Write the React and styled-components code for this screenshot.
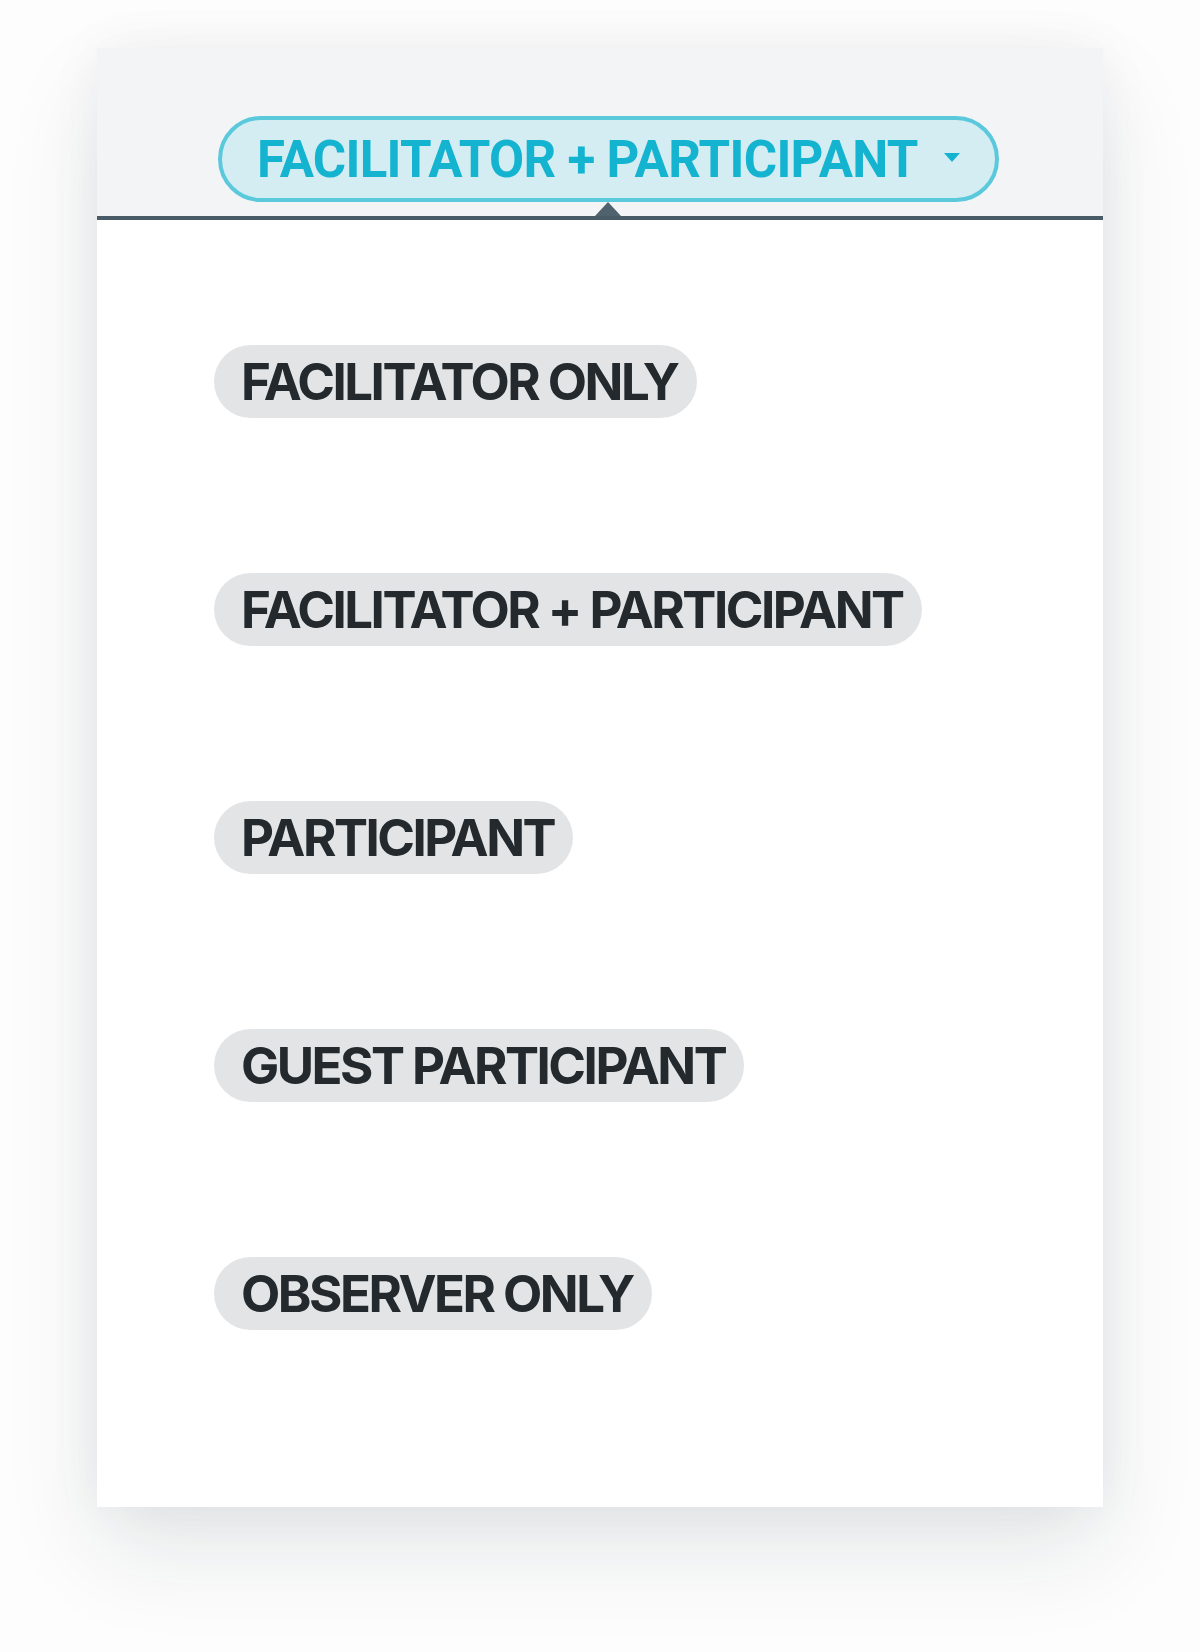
import React, { useState } from 'react'
import styled, { createGlobalStyle } from 'styled-components'

const GlobalStyle = createGlobalStyle`
  html, body {
    margin: 0;
    padding: 0;
    background: #fdfdfd;
  }
  body {
    font-family: Inter, Roboto, "Liberation Sans", Arial, sans-serif;
  }
`

const Page = styled.div`
  min-height: 1652px;
  padding: 48px 97px 0;
  box-sizing: border-box;
`

const Panel = styled.div`
  height: 1459px;
  background: #ffffff;
  display: flex;
  flex-direction: column;
  box-shadow: 0 0 50px rgba(20, 40, 50, 0.05), 0 44px 90px rgba(20, 40, 50, 0.1);
`

const Header = styled.div`
  background: #f3f4f5;
  padding: 68px 0 0 121px;
  border-bottom: 4px solid #485b66;
  display: flex;
`

const SelectWrap = styled.div`
  display: flex;
  flex-direction: column;
  align-items: center;
`

const Select = styled.button`
  height: 86px;
  box-sizing: border-box;
  display: flex;
  align-items: center;
  gap: 26px;
  padding: 0 35px 0 35px;
  background: #d4edf3;
  border: 4px solid #5bc9dc;
  border-radius: 43px;
  color: #14b3cf;
  font-family: Roboto, "Liberation Sans", Arial, sans-serif;
  font-weight: 700;
  font-size: 51px;
  letter-spacing: -0.7px;
  cursor: pointer;
`

const Caret = styled.span`
  width: 0;
  height: 0;
  border-left: 8px solid transparent;
  border-right: 8px solid transparent;
  border-top: 9px solid #14b3cf;
  margin-top: -4px;
`

const Pointer = styled.span`
  width: 0;
  height: 0;
  border-left: 13px solid transparent;
  border-right: 13px solid transparent;
  border-bottom: 14px solid #4f626d;
`

const List = styled.ul`
  list-style: none;
  margin: 0;
  padding: 125px 0 0 117px;
  display: flex;
  flex-direction: column;
  align-items: flex-start;
  gap: 155px;
`

const Option = styled.li`
  height: 73px;
  display: flex;
  align-items: center;
  padding: 0 19px 0 27px;
  border-radius: 37px;
  background: #e2e4e6;
  color: #23292d;
  font-weight: 700;
  font-size: 51px;
  letter-spacing: -2.5px;
  cursor: pointer;
`

const roles = [
  'FACILITATOR ONLY',
  'FACILITATOR + PARTICIPANT',
  'PARTICIPANT',
  'GUEST PARTICIPANT',
  'OBSERVER ONLY'
]

function App () {
  const [role, setRole] = useState('FACILITATOR + PARTICIPANT')

  return (
    <Page>
      <GlobalStyle />
      <Panel>
        <Header>
          <SelectWrap>
            <Select>
              {role}
              <Caret />
            </Select>
            <Pointer />
          </SelectWrap>
        </Header>
        <List>
          {roles.map(item =>
            <Option key={item} onClick={() => setRole(item)}>{item}</Option>
          )}
        </List>
      </Panel>
    </Page>
  )
}

export default App
